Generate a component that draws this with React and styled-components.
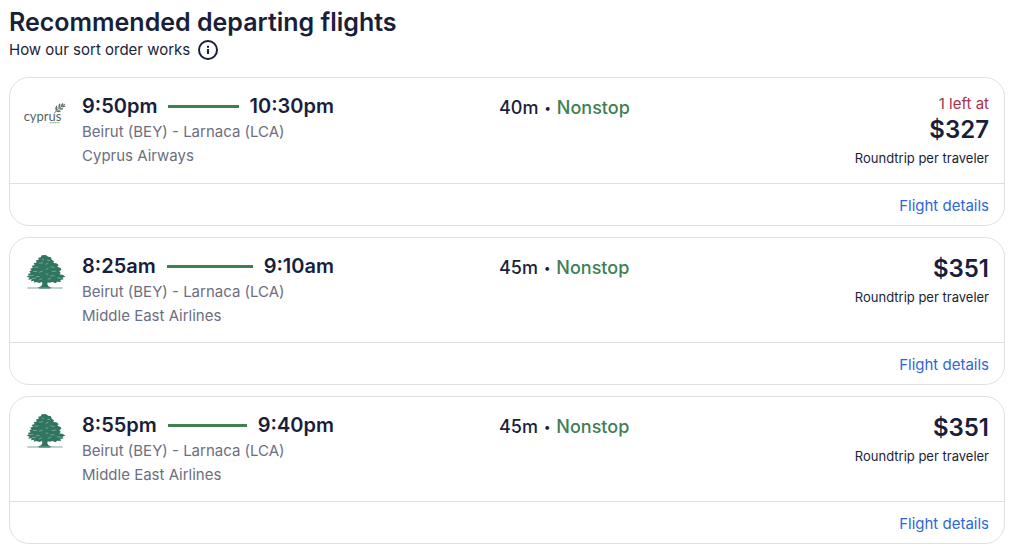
import React from 'react';
import styled, { createGlobalStyle } from 'styled-components';

const GlobalStyle = createGlobalStyle`
  * {
    box-sizing: border-box;
  }

  body {
    margin: 0;
    background: #fff;
    color: #191e3b;
    font-family: 'Inter', 'Liberation Sans', sans-serif;
    font-size: 15px;
    line-height: 24px;
  }
`;

const Page = styled.main`
  padding: 6px 19px 8px 9px;
`;

const Title = styled.h1`
  margin: 0;
  font-size: 25px;
  font-weight: 600;
  line-height: 32px;
`;

const SortInfo = styled.div`
  display: flex;
  align-items: center;
  gap: 7px;
  margin-bottom: 15px;
`;

const InfoButton = styled.button`
  display: flex;
  padding: 0;
  border: none;
  background: none;
  color: inherit;
  cursor: pointer;
`;

const FlightList = styled.ul`
  display: flex;
  flex-direction: column;
  gap: 11px;
  margin: 0;
  padding: 0;
  list-style: none;
`;

const Card = styled.li`
  border: 1px solid #dfe0e4;
  border-radius: 20px;
`;

const CardBody = styled.div`
  display: grid;
  grid-template-columns: 58px 252fr 165fr 300fr 190fr;
  padding: 15px 15px 14px 14px;
`;

const Times = styled.div`
  display: flex;
  align-items: center;
  gap: 11px;
  margin-bottom: 1px;
  font-size: 20px;
  font-weight: 600;
  line-height: 26px;
`;

const TimeLine = styled.span`
  flex: 1;
  height: 3px;
  background: #3f7f52;
`;

const Detail = styled.div`
  color: #6c6e82;
`;

const Duration = styled.div`
  display: flex;
  align-items: center;
  align-self: start;
  gap: 6px;
  grid-column: 4;
  padding-top: 3px;
  font-size: 18px;
  font-weight: 500;
  white-space: nowrap;
`;

const Bullet = styled.span`
  font-size: 12px;
`;

const Stops = styled.span`
  color: #3f7f52;
`;

const PriceColumn = styled.div`
  text-align: right;
`;

const SeatsLeft = styled.div`
  color: #a7324a;
  line-height: 21px;
`;

const Price = styled.div`
  font-size: 24px;
  font-weight: 600;
  line-height: 32px;
`;

const PriceNote = styled.div`
  margin-top: 2px;
  font-size: 13px;
  line-height: 21px;
`;

const CardFooter = styled.div`
  display: flex;
  justify-content: flex-end;
  padding: 10px 15px 7px;
  border-top: 1px solid #dfe0e4;
`;

const DetailsLink = styled.a`
  color: #2f66d8;
  text-decoration: none;
`;

const LogoText = styled.text`
  font-family: 'Lato', sans-serif;
  font-size: 39px;
  fill: #56645e;
`;

const InfoIcon = () => (
  <svg width="22" height="22" viewBox="0 0 22 22" fill="none" stroke="currentColor" strokeWidth="2" aria-hidden="true">
    <circle cx="11" cy="11" r="9" />
    <path d="M11 10v5" />
    <path d="M11 6.8v2" />
  </svg>
);

const CyprusLogo = () => (
  <svg width="42" height="42" viewBox="27 9 126 126" role="img" aria-label="Cyprus Airways">
    <LogoText x="26" y="94">cyprus</LogoText>
    <path d="M104 98h30" stroke="#6fae9d" strokeWidth="3" strokeDasharray="4 1" />
    <path d="M117 70Q128 56 150 42" stroke="#5c7568" strokeWidth="3" fill="none" />
    <g fill="#5c7568">
      <path d="M122 62q-3-10 3-16q5 7-1 16z" />
      <path d="M130 55q-2-10 4-15q5 6-1 14z" />
      <path d="M138 49q-1-8 6-11q3 6-3 10z" />
      <path d="M123 64q9-6 15 0q-7 6-15 0z" />
      <path d="M131 57q8-6 15-1q-7 6-15 1z" />
      <path d="M139 51q7-7 14-3q-6 6-14 3z" />
    </g>
  </svg>
);

const CedarLogo = () => (
  <svg width="42" height="42" viewBox="27 24 126 126" role="img" aria-label="Middle East Airlines">
    <path
      fill="#2f7560"
      d="M80 31L92 30L100 35L108 37L110 44L117 49L115 54L124 55L131 60L127 65L137 69L139 75L133 78L137 84L133 88L144 90L151 95L142 98L146 103L136 105L138 111L126 110L122 115L112 111L104 113L98 112L97 118Q99 126 112 128L66 128Q79 126 82 118L81 111L73 114L64 111L56 113L58 107L48 109L50 103L39 104L44 98L35 95L42 91L38 87L47 85L43 79L50 76L45 71L54 68L50 63L59 60L56 54L65 53L63 46L71 45L70 38L77 37Z"
    />
    <path
      d="M80 42l7 3M97 46l8 1M72 55l12-2M92 58l8-3M58 67l12-1M106 65l13 3M92 73l8-2M54 79l12 1M72 82l11-4M110 80l14-2M92 86l8 3M42 92l14-1M63 94l11 1M106 93l12-1M126 98l13 2M50 101l14-2M72 105l9-4M98 103l10-3"
      stroke="#fff"
      strokeWidth="2"
      opacity="0.5"
    />
    <path d="M37 129h106" stroke="#7fa79b" strokeWidth="3" />
    <path d="M72 129h34" stroke="#2f7560" strokeWidth="3" />
  </svg>
);

const flights = [
  { departs: '9:50pm', arrives: '10:30pm', airline: 'Cyprus Airways', duration: '40m', price: '$327', seats: '1 left at', Logo: CyprusLogo },
  { departs: '8:25am', arrives: '9:10am', airline: 'Middle East Airlines', duration: '45m', price: '$351', Logo: CedarLogo },
  { departs: '8:55pm', arrives: '9:40pm', airline: 'Middle East Airlines', duration: '45m', price: '$351', Logo: CedarLogo },
];

const FlightCard = ({ flight }) => {
  const { Logo } = flight;
  return (
    <Card>
      <CardBody>
        <Logo />
        <div>
          <Times>
            <span>{flight.departs}</span>
            <TimeLine />
            <span>{flight.arrives}</span>
          </Times>
          <Detail>Beirut (BEY) - Larnaca (LCA)</Detail>
          <Detail>{flight.airline}</Detail>
        </div>
        <Duration>
          <span>{flight.duration}</span>
          <Bullet>•</Bullet>
          <Stops>Nonstop</Stops>
        </Duration>
        <PriceColumn>
          {flight.seats && <SeatsLeft>{flight.seats}</SeatsLeft>}
          <Price>{flight.price}</Price>
          <PriceNote>Roundtrip per traveler</PriceNote>
        </PriceColumn>
      </CardBody>
      <CardFooter>
        <DetailsLink href="#details">Flight details</DetailsLink>
      </CardFooter>
    </Card>
  );
};

const App = () => (
  <Page>
    <GlobalStyle />
    <Title>Recommended departing flights</Title>
    <SortInfo>
      How our sort order works
      <InfoButton type="button" aria-label="How our sort order works">
        <InfoIcon />
      </InfoButton>
    </SortInfo>
    <FlightList>
      {flights.map((flight) => (
        <FlightCard key={flight.departs} flight={flight} />
      ))}
    </FlightList>
  </Page>
);

export default App;
